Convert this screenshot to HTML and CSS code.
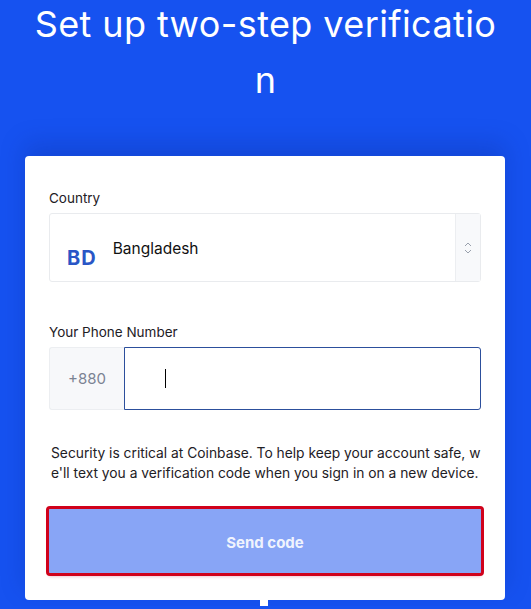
FILE: index.html
```html
<!DOCTYPE html>
<html lang="en">
  <head>
    <meta charset="UTF-8" />
    <meta name="viewport" content="width=device-width, initial-scale=1.0" />
    <title>Set up two-step verification</title>
    <link rel="stylesheet" href="styles.css">
  </head>
  <body>
    <h1 class="page-title">Set up two-step verification</h1>

    <div class="card">
      <label class="field-label">Country</label>
      <div class="country-select">
        <span class="country-code">BD</span>
        <span class="country-name">Bangladesh</span>
        <span class="select-arrows">
          <svg width="10" height="16" viewBox="0 0 10 16">
            <path d="M2 6 L5 3 L8 6" fill="none" stroke="#9aa1ad" stroke-width="1" />
            <path d="M2 10 L5 13 L8 10" fill="none" stroke="#9aa1ad" stroke-width="1" />
          </svg>
        </span>
      </div>

      <label class="field-label phone-label">Your Phone Number</label>
      <div class="phone-row">
        <div class="phone-prefix">+880</div>
        <div class="phone-input"><span class="caret"></span></div>
      </div>

      <p class="note">Security is critical at Coinbase. To help keep your account safe, we'll text you a verification code when you sign in on a new device.</p>

      <button class="send-btn">Send code</button>
    </div>
    <div class="notch"></div>
  </body>
</html>
```

FILE: styles.css
```css
/* Page */
body {
  margin: 0;
  padding: 0;
  background-color: #1652f0;
  font-family: Inter, "Open Sans", sans-serif;
  overflow: hidden;
}

/* Big heading, breaks anywhere like the original */
.page-title {
  margin: -4px auto 0;
  width: 476px;
  color: #fff;
  font-size: 36px;
  font-weight: 400;
  letter-spacing: 0.4px;
  line-height: 56px;
  text-align: center;
  word-break: break-all;
}

/* White card */
.card {
  background-color: #fff;
  margin: 48px 26px 0 25px;
  padding: 32px 24px 27px;
  border-radius: 4px;
  box-shadow: 0 -12px 24px rgba(10, 40, 140, 0.25);
}

.field-label {
  display: block;
  font-size: 13.5px;
  line-height: 20px;
  color: #1e2025;
  margin-bottom: 5px;
}

.phone-label {
  margin-top: 40px;
}

/* Country select */
.country-select {
  display: flex;
  align-items: center;
  height: 67px;
  border: 1px solid #e9ebee;
  border-radius: 3px;
}

.country-code {
  margin-left: 17px;
  margin-top: 20px;
  font-size: 20px;
  font-weight: 700;
  letter-spacing: 1px;
  color: #2a56c6;
}

.country-name {
  margin-left: 16px;
  margin-top: 2px;
  font-size: 15.5px;
  color: #111;
}

.select-arrows {
  margin-left: auto;
  width: 24px;
  height: 100%;
  display: flex;
  align-items: center;
  justify-content: center;
  background-color: #f8f9fb;
  border-left: 1px solid #eceef1;
}

/* Phone number */
.phone-row {
  display: flex;
  height: 63px;
}

.phone-prefix {
  width: 75px;
  display: flex;
  align-items: center;
  justify-content: center;
  background-color: #f7f8fa;
  border: 1px solid #eceef1;
  border-right: none;
  border-radius: 3px 0 0 3px;
  color: #7b8393;
  font-size: 15px;
  box-sizing: border-box;
}

.phone-input {
  flex: 1;
  display: flex;
  align-items: center;
  border: 1px solid #2c4f9c;
  border-radius: 0 3px 3px 0;
}

.caret {
  display: block;
  width: 1px;
  height: 19px;
  margin-left: 40px;
  background-color: #000;
}

/* Info text */
.note {
  margin: 33px 0 0 2px;
  font-size: 13.8px;
  line-height: 20px;
  color: #1e2025;
  word-break: break-all;
}

/* Button */
.send-btn {
  display: block;
  width: 100%;
  height: 64px;
  margin-top: 26px;
  padding-top: 4px;
  background-color: #88a5f6;
  border: none;
  border-radius: 1px;
  outline: 3px solid #d0021b;
  color: rgba(255, 255, 255, 0.9);
  font-family: inherit;
  font-size: 15px;
  font-weight: 700;
  box-shadow: 0 4px 3px rgba(200, 40, 80, 0.25);
}

.notch {
  width: 8px;
  height: 6px;
  margin-left: 260px;
  background-color: #fff;
}
```
